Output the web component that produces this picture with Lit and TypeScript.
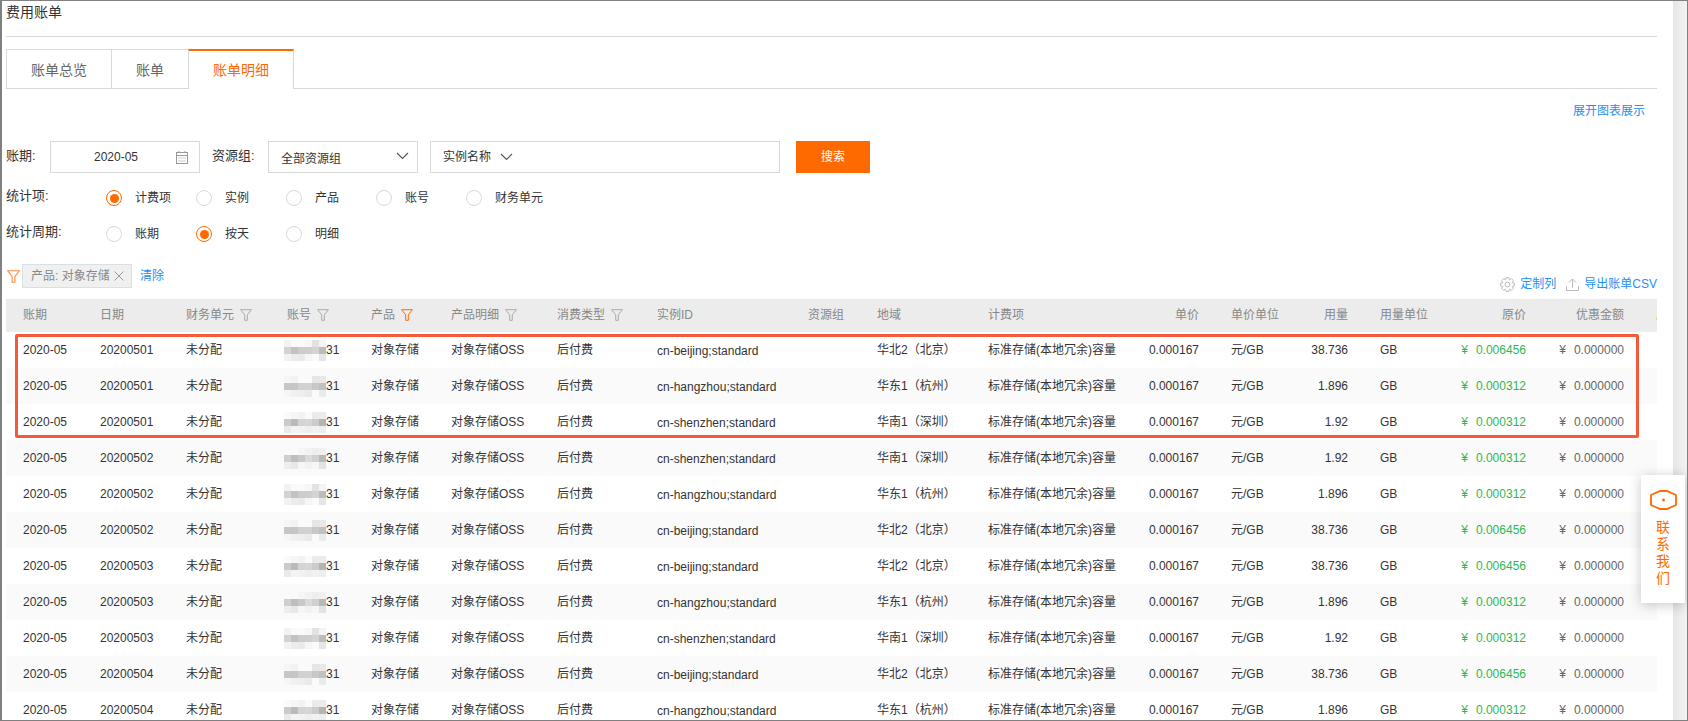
import { LitElement, css, html, svg } from "lit";
import { customElement } from "lit/decorators.js";

const funnel = (color: string, size = 12) => html`<svg class="funnel" width=${size} height=${size} viewBox="0 0 12 12" fill="none" stroke=${color} stroke-width="1">
  <path d="M.6 .7H11.4L7.3 5.9V11.3H4.7V5.9Z" />
</svg>`;

const chevron = html`<svg class="chev" width="13" height="8" viewBox="0 0 13 8" fill="none" stroke="#555" stroke-width="1.1"><path d="M1 1l5.5 5.5L12 1" /></svg>`;

function gearPath() {
  const pts: string[] = [];
  for (let i = 0; i < 8; i++) {
    const a = (i * Math.PI) / 4;
    for (const [r, off] of [[5.2, -0.36], [7, -0.2], [7, 0.2], [5.2, 0.36]]) {
      const x = 7.5 + r * Math.cos(a + off);
      const y = 7.5 + r * Math.sin(a + off);
      pts.push(`${x.toFixed(2)} ${y.toFixed(2)}`);
    }
  }
  return "M" + pts.join("L") + "Z";
}

const SHADES = [
  [0xf6, 0xf6, 0xf6, 0xf6, 0xe6, 0xec],
  [0xcb, 0xbe, 0xcc, 0xd2, 0xcc, 0xb8],
  [0xee, 0xec, 0xee, 0xee, 0xf6, 0xe6],
];

const mosaic = (row: number) => html`<span class="mosaic">
  ${SHADES.flatMap((line, y) =>
    line.map((v, x) => {
      const c = Math.min(250, v + ((x * 7 + y * 3 + row * 5) % 4) * 4 - 4);
      return html`<i style="background:rgb(${c},${c},${c})"></i>`;
    })
  )}
</span>`;

const REGIONS: Record<string, [string, string]> = {
  b: ["cn-beijing;standard", "华北2（北京）"],
  h: ["cn-hangzhou;standard", "华东1（杭州）"],
  s: ["cn-shenzhen;standard", "华南1（深圳）"],
};
const USAGE: Record<string, [string, string]> = {
  b: ["38.736", "0.006456"],
  h: ["1.896", "0.000312"],
  s: ["1.92", "0.000312"],
};

const ROWS: [string, string][] = [
  ["20200501", "b"], ["20200501", "h"], ["20200501", "s"],
  ["20200502", "s"], ["20200502", "h"], ["20200502", "b"],
  ["20200503", "b"], ["20200503", "h"], ["20200503", "s"],
  ["20200504", "b"], ["20200504", "h"],
];

@customElement("app-root")
export class AppRoot extends LitElement {
  static styles = css`
    :host {
      display: block;
      font-family: "Liberation Sans", "Noto Sans CJK SC", sans-serif;
      font-size: 12px;
      line-height: 18px;
      color: #333;
    }
    .frame {
      position: relative;
      box-sizing: border-box;
      height: 721px;
      display: flex;
      overflow: hidden;
      background: #fff;
      border: 1px solid #808080;
      border-left-width: 2px;
    }
    .main {
      flex: 1;
      min-width: 0;
      padding: 0 16px 0 4px;
    }
    .scrollbar {
      width: 14px;
      flex: none;
      background: linear-gradient(90deg, #e6e6e6, #f3f3f3);
    }
    .title {
      height: 22px;
      padding-bottom: 13px;
      line-height: 22px;
      font-size: 14px;
      border-bottom: 1px solid #d9d9d9;
    }
    .tabs {
      display: flex;
      margin-top: 12px;
      height: 40px;
      box-sizing: border-box;
      border-bottom: 1px solid #d9d9d9;
    }
    .tab {
      height: 40px;
      box-sizing: border-box;
      padding: 0 24px;
      border: 1px solid #d9d9d9;
      margin-left: -1px;
      line-height: 40px;
      font-size: 14px;
      color: #666;
      background: #fff;
    }
    .tab:first-child {
      margin-left: 0;
    }
    .tab.on {
      color: #ff6a00;
      border-top: 2px solid #ff6a00;
      border-bottom: none;
      line-height: 38px;
    }
    .chart-link {
      margin-top: 12px;
      height: 20px;
      line-height: 20px;
      text-align: right;
      padding-right: 12px;
      color: #1e90f5;
    }
    .filters {
      display: flex;
      align-items: center;
      margin-top: 20px;
      margin-bottom: 7px;
      height: 32px;
    }
    .lbl {
      font-size: 13px;
      flex: none;
      line-height: 18px;
      padding-bottom: 3px;
    }
    .lbl.period { width: 44px; }
    .lbl.group { width: 56px; margin-left: 12px; }
    .box {
      box-sizing: border-box;
      height: 32px;
      border: 1px solid #d9d9d9;
      display: flex;
      align-items: center;
      flex: none;
    }
    .date { width: 150px; padding-left: 43px; justify-content: space-between; padding-right: 11px; }
    .select { width: 150px; padding: 3px 8px 0 12px; justify-content: space-between; }
    .select .chev { margin-top: -5px; }
    .instance { width: 350px; margin-left: 12px; padding-left: 12px; gap: 9px; }
    .search {
      flex: none;
      width: 74px;
      height: 32px;
      margin-left: 16px;
      background: #ff6a00;
      color: #fff;
      line-height: 32px;
      text-align: center;
    }
    .radios {
      display: flex;
      align-items: center;
      height: 36px;
    }
    .radios .lbl { width: 100px; padding-bottom: 4px; }
    .opt {
      width: 90px;
      display: flex;
      align-items: center;
      gap: 13px;
    }
    .dot {
      box-sizing: border-box;
      width: 16px;
      height: 16px;
      border-radius: 50%;
      border: 1px solid #d9d9d9;
      display: flex;
      align-items: center;
      justify-content: center;
    }
    .dot.on { border-color: #ff6a00; }
    .dot.on::after {
      content: "";
      width: 9px;
      height: 9px;
      border-radius: 50%;
      background: #ff6a00;
    }
    .bar {
      margin-top: 12px;
      height: 35px;
      display: flex;
      justify-content: space-between;
      align-items: flex-start;
    }
    .active {
      display: flex;
      align-items: center;
      height: 24px;
    }
    .active .funnel { margin: 0 2px 0 1px; }
    .tag {
      box-sizing: border-box;
      width: 110px;
      height: 24px;
      background: #f0f0f0;
      border: 1px solid #d8e0e6;
      color: #888;
      display: flex;
      align-items: center;
      gap: 4px;
      padding-left: 8px;
      white-space: nowrap;
    }
    .clear { margin-left: 8px; color: #1e90f5; }
    .tools {
      margin-top: 10px;
      height: 20px;
      display: flex;
      align-items: center;
      color: #1e90f5;
    }
    .tools svg { margin-right: 5px; }
    .tools span { margin-right: 10px; }
    .tools span:last-child { margin-right: 0; }
    .table { position: relative; }
    .hd, .row {
      display: grid;
      grid-template-columns: 77px 86px 101px 84px 80px 106px 100px 151px 69px 111px 160px 83px 69px 80px 70px 76px 98px 33px;
      padding-left: 17px;
      align-items: center;
      white-space: nowrap;
    }
    .hd {
      box-sizing: border-box;
      height: 33px;
      padding-bottom: 2px;
      background: #ececec;
      color: #888;
    }
    .row { height: 36px; }
    .row:nth-child(even) { background: #fafafa; }
    .c { min-width: 0; display: flex; align-items: center; }
    .inst { padding-top: 1px; }
    .funnel { margin-left: 6px; flex: none; }
    .tail { overflow: hidden; padding-left: 32px; }
    .r { justify-content: flex-end; }
    .r.p32 { padding-right: 32px; }
    .yen { margin-right: 8px; }
    .green { color: #2eb84f; }
    .muted { color: #666; }
    .acct { margin-left: -3px; }
    .mosaic {
      display: grid;
      grid-template-columns: repeat(6, 7px);
      grid-auto-rows: 7px;
      width: 42px;
    }
    .mosaic i { display: block; }
    .highlight {
      position: absolute;
      left: 9px;
      top: 35px;
      width: 1624px;
      height: 104px;
      box-sizing: border-box;
      border: 3px solid #f4593a;
      border-radius: 2px;
    }
    .contact {
      position: absolute;
      left: 1639px;
      top: 474px;
      width: 44px;
      height: 128px;
      background: #fff;
      box-shadow: 0 2px 12px rgba(0, 0, 0, 0.22);
      color: #ff6a00;
      font-size: 14px;
      line-height: 17px;
      display: flex;
      flex-direction: column;
      align-items: center;
      padding-top: 15px;
      box-sizing: border-box;
    }
    .contact svg { margin-bottom: 9px; }
    .contact span { display: block; }
  `;

  private head() {
    return html`<div class="hd">
      <div class="c">账期</div>
      <div class="c">日期</div>
      <div class="c">财务单元${funnel("#aaa")}</div>
      <div class="c">账号${funnel("#aaa")}</div>
      <div class="c">产品${funnel("#ff6a00")}</div>
      <div class="c">产品明细${funnel("#aaa")}</div>
      <div class="c">消费类型${funnel("#aaa")}</div>
      <div class="c">实例ID</div>
      <div class="c">资源组</div>
      <div class="c">地域</div>
      <div class="c">计费项</div>
      <div class="c r p32">单价</div>
      <div class="c">单价单位</div>
      <div class="c r p32">用量</div>
      <div class="c">用量单位</div>
      <div class="c r">原价</div>
      <div class="c r">优惠金额</div>
      <div class="c tail">应付金额</div>
    </div>`;
  }

  private row(date: string, key: string, i: number) {
    const [inst, region] = REGIONS[key];
    const [qty, price] = USAGE[key];
    return html`<div class="row">
      <div class="c">2020-05</div>
      <div class="c">${date}</div>
      <div class="c">未分配</div>
      <div class="c acct">${mosaic(i)}31</div>
      <div class="c">对象存储</div>
      <div class="c">对象存储OSS</div>
      <div class="c">后付费</div>
      <div class="c inst">${inst}</div>
      <div class="c"></div>
      <div class="c">${region}</div>
      <div class="c">标准存储(本地冗余)容量</div>
      <div class="c r p32">0.000167</div>
      <div class="c">元/GB</div>
      <div class="c r p32">${qty}</div>
      <div class="c">GB</div>
      <div class="c r green"><span class="yen">¥</span>${price}</div>
      <div class="c r muted"><span class="yen">¥</span>0.000000</div>
      <div class="c"></div>
    </div>`;
  }

  private radios(label: string, opts: string[], on: number) {
    return html`<div class="radios">
      <div class="lbl">${label}</div>
      ${opts.map(
        (o, i) => html`<div class="opt"><span class="dot ${i === on ? "on" : ""}"></span>${o}</div>`
      )}
    </div>`;
  }

  render() {
    return html`<div class="frame">
      <div class="main">
        <div class="title">费用账单</div>
        <div class="tabs">
          <div class="tab">账单总览</div>
          <div class="tab">账单</div>
          <div class="tab on">账单明细</div>
        </div>
        <div class="chart-link">展开图表展示</div>
        <div class="filters">
          <div class="lbl period">账期:</div>
          <div class="box date">
            2020-05
            <svg width="12" height="13" viewBox="0 0 12 13" fill="none" stroke="#999">
              <rect x=".5" y="1.5" width="11" height="11" />
              <path d="M.5 4.5h11M3 0v2M9 0v2" />
              <path d="M2.5 7h7M2.5 10h7" stroke-dasharray="1 1" />
            </svg>
          </div>
          <div class="lbl group">资源组:</div>
          <div class="box select">全部资源组${chevron}</div>
          <div class="box instance">实例名称${chevron}</div>
          <div class="search">搜索</div>
        </div>
        ${this.radios("统计项:", ["计费项", "实例", "产品", "账号", "财务单元"], 0)}
        ${this.radios("统计周期:", ["账期", "按天", "明细"], 1)}
        <div class="bar">
          <div class="active">
            ${funnel("#ff8a3c", 13)}
            <div class="tag">
              产品: 对象存储
              <svg width="10" height="10" viewBox="0 0 10 10" stroke="#999"><path d="M.5 .5l9 9M9.5 .5l-9 9" /></svg>
            </div>
            <span class="clear">清除</span>
          </div>
          <div class="tools">
            <svg width="15" height="15" viewBox="0 0 15 15" fill="none" stroke="#bbb">
              ${svg`<path d=${gearPath()} /><circle cx="7.5" cy="7.5" r="2.4" />`}
            </svg>
            <span>定制列</span>
            <svg width="13" height="13" viewBox="0 0 13 13" fill="none" stroke="#bbb">
              <path d="M.5 8v4.5h12V8M6.5 10V1M3 4.5L6.5 1 10 4.5" />
            </svg>
            <span>导出账单CSV</span>
          </div>
        </div>
        <div class="table">
          ${this.head()}
          <div>${ROWS.map(([d, k], i) => this.row(d, k, i))}</div>
          <div class="highlight"></div>
        </div>
      </div>
      <div class="scrollbar"></div>
      <div class="contact">
        <svg width="27" height="20" viewBox="0 0 27 20" fill="none" stroke="#ff6a00" stroke-width="1.8">
          <path d="M1 5L10 1H17L26 5V15L17 19H10L1 15Z" />
          <circle cx="13.5" cy="10" r="1.4" fill="#ff6a00" stroke="none" />
        </svg>
        <span>联</span><span>系</span><span>我</span><span>们</span>
      </div>
    </div>`;
  }
}

declare global {
  interface HTMLElementTagNameMap {
    "app-root": AppRoot;
  }
}
